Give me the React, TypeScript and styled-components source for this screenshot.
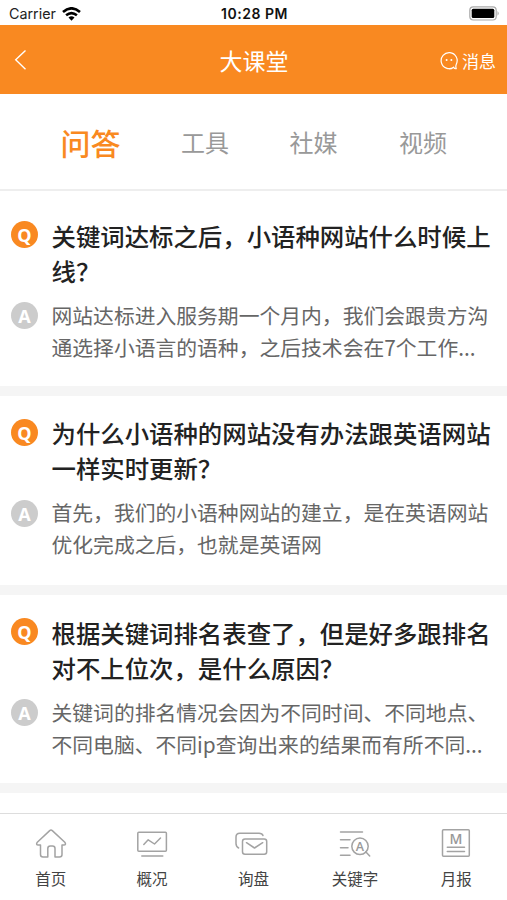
import React from "react";
import styled, { createGlobalStyle } from "styled-components";

const GlobalStyle = createGlobalStyle`
  * { box-sizing: border-box; }
  body {
    margin: 0;
    background: #fff;
    font-family: "Noto Sans CJK SC", sans-serif;
  }
`;

const Screen = styled.div`
  width: 507px;
  height: 900px;
  display: flex;
  flex-direction: column;
  overflow: hidden;
  background: #fff;
`;

const StatusBar = styled.div`
  flex: none;
  height: 25px;
  padding: 3px 7px 0 9px;
  display: grid;
  grid-template-columns: 1fr auto 1fr;
  align-items: center;
  font-family: Inter, sans-serif;
  font-size: 14.3px;
  line-height: 20px;
  color: #222;
`;

const Carrier = styled.div`
  display: flex;
  align-items: center;
  gap: 6px;
`;

const Clock = styled.div`
  font-size: 14px;
  letter-spacing: 0.5px;
  font-weight: 600;
  color: #111;
`;

const BatteryIcon = styled.svg`
  justify-self: end;
  margin-bottom: 2px;
`;

const Header = styled.header`
  flex: none;
  height: 69px;
  padding: 0 11px 0 12px;
  display: grid;
  grid-template-columns: 1fr auto 1fr;
  align-items: center;
  background: #f98921;
  color: #fff;
`;

const Title = styled.h1`
  margin: 0;
  font-size: 23px;
  font-weight: 400;
  line-height: 30px;
`;

const Message = styled.div`
  justify-self: end;
  display: flex;
  align-items: center;
  gap: 4px;
  font-size: 17px;
  line-height: 24px;
  padding-top: 3px;
`;

const Tabs = styled.nav`
  flex: none;
  height: 97px;
  padding: 0 22px 0 37px;
  display: grid;
  grid-template-columns: 107px 122px 95px 1fr;
  align-items: center;
  justify-items: center;
  border-bottom: 2px solid #eee;
`;

const Tab = styled.div<{ $active?: boolean }>`
  font-size: ${(p) => (p.$active ? 30 : 24)}px;
  font-weight: ${(p) => (p.$active ? 500 : 400)};
  line-height: 36px;
  color: ${(p) => (p.$active ? "#f98921" : "#999")};
`;

const List = styled.main`
  flex: 1;
  min-height: 0;
  overflow: hidden;
`;

const Card = styled.article<{ $height: number; $top: number }>`
  height: ${(p) => p.$height}px;
  padding: ${(p) => p.$top}px 10px 0 11px;
  border-bottom: 10px solid #f5f5f5;
`;

const Row = styled.div<{ $gap?: number }>`
  display: grid;
  grid-template-columns: 27px 1fr;
  column-gap: 13.5px;
  margin-top: ${(p) => p.$gap ?? 0}px;
`;

const Badge = styled.div<{ $tone: string }>`
  width: 27px;
  height: 27px;
  margin-top: 3.4px;
  padding-top: 2px;
  border-radius: 50%;
  display: flex;
  align-items: center;
  justify-content: center;
  background: ${(p) => p.$tone};
  color: #fff;
  font-family: "Open Sans", sans-serif;
  font-size: 18px;
  font-weight: 700;
  line-height: 25px;
`;

const Question = styled.h2`
  margin: 0;
  font-size: 24.4px;
  font-weight: 500;
  line-height: 35px;
  color: #222;
  white-space: pre;
`;

const Answer = styled.p`
  margin: 0;
  font-size: 20.8px;
  line-height: 32px;
  color: #666;
  white-space: pre;
`;

const BottomBar = styled.nav`
  flex: none;
  height: 87px;
  padding-top: 12px;
  display: grid;
  grid-template-columns: repeat(5, 1fr);
  border-top: 1px solid #ddd;
  background: #fff;
`;

const NavItem = styled.div`
  display: flex;
  flex-direction: column;
  align-items: center;
  gap: 5px;
  font-size: 15.5px;
  line-height: 23px;
  color: #444;
`;

const NavIcon = styled.svg`
  width: 36px;
  height: 36px;
  fill: none;
  stroke: #a3a3a3;
  stroke-width: 1.5;
  stroke-linecap: round;
  stroke-linejoin: round;
`;

const IconLetter = styled.text`
  fill: #999;
  stroke: none;
  text-anchor: middle;
  font-family: "Open Sans", sans-serif;
  font-weight: 600;
`;

const cards = [
  {
    height: 205, top: 27, gap: 10.5,
    q: "关键词达标之后，小语种网站什么时候上\n线？",
    a: "网站达标进入服务期一个月内，我们会跟贵方沟\n通选择小语言的语种，之后技术会在7个工作...",
  },
  {
    height: 199, top: 19.4, gap: 11,
    q: "为什么小语种的网站没有办法跟英语网站\n一样实时更新？",
    a: "首先，我们的小语种网站的建立，是在英语网站\n优化完成之后，也就是英语网",
  },
  {
    height: 198, top: 20, gap: 11,
    q: "根据关键词排名表查了，但是好多跟排名\n对不上位次，是什么原因？",
    a: "关键词的排名情况会因为不同时间、不同地点、\n不同电脑、不同ip查询出来的结果而有所不同...",
  },
];

const navItems = [
  {
    label: "首页",
    icon: (
      <path d="M16.7 4.6Q18 3.4 19.3 4.6L31.8 16.2Q33.6 18.8 30.8 18.9H29V28.5Q29 31 26.5 31H22V22.5Q22 20 19.5 20H17.3Q14.8 20 14.8 22.5V31H10Q7.5 31 7.5 28.5V18.9H5.3Q2.5 18.8 4.3 16.2Z" />
    ),
  },
  {
    label: "概况",
    icon: (
      <>
        <rect x="3.8" y="6.2" width="28.6" height="19" rx="1" />
        <path d="M9.8 18.5L14.2 13.8L20.5 18L26.5 12M7.8 30.1H28.8" />
      </>
    ),
  },
  {
    label: "询盘",
    icon: (
      <>
        <path d="M3.6 22Q1 20.5 1 17.5V11Q1 7.2 4.8 7.2H24Q27.2 7.2 28 9.5" />
        <rect x="7.5" y="13" width="24.2" height="15.2" rx="2.5" />
        <path d="M11.5 16.7L19.5 22L27.7 16.7" />
      </>
    ),
  },
  {
    label: "关键字",
    icon: (
      <>
        <path d="M3.5 6H25.5M3.5 13.8H13M3.5 21.7H11M3.5 29.3H13M28.7 25.7L32.7 30" />
        <circle cx="23" cy="20.3" r="8.2" />
        <IconLetter x="23" y="24.8" fontSize="12.5">A</IconLetter>
      </>
    ),
  },
  {
    label: "月报",
    icon: (
      <>
        <rect x="4.5" y="3.7" width="26.8" height="26.6" rx="1" />
        <path d="M9.3 21.3H26.5M9.3 25.4H26.5" />
        <IconLetter x="18" y="17.8" fontSize="14">M</IconLetter>
      </>
    ),
  },
];

export default function App() {
  return (
    <Screen>
      <GlobalStyle />
      <StatusBar>
        <Carrier>
          Carrier
          <svg width="19" height="14" viewBox="0 0 19 14" fill="none" stroke="#000" strokeWidth="2.6">
            <path d="M1 5Q9.5 -2.4 18 5M4.1 8.3Q9.5 3.9 14.9 8.3" />
            <path d="M6.5 10.5Q9.5 8.2 12.5 10.5L9.5 13.7Z" fill="#000" stroke="none" />
          </svg>
        </Carrier>
        <Clock>10:28 PM</Clock>
        <BatteryIcon width="31" height="15" viewBox="0 0 31 15">
          <rect x="0.8" y="0.8" width="26.4" height="13.2" rx="3.5" fill="#fff" stroke="#aaa" strokeWidth="1.2" />
          <rect x="2.7" y="2.7" width="22.6" height="9.4" rx="1.5" fill="#000" />
          <path d="M28.5 5Q31 7.4 28.5 9.8Z" fill="#aaa" />
        </BatteryIcon>
      </StatusBar>
      <Header>
        <svg width="16" height="22" viewBox="0 0 16 22" fill="none" stroke="#fff" strokeWidth="1.4">
          <path d="M13.5 1.5L3.7 10.7L13.5 20.2" />
        </svg>
        <Title>大课堂</Title>
        <Message>
          <svg width="18" height="18" viewBox="0 0 18 18" fill="none" stroke="#fff" strokeWidth="1.2">
            <path d="M13.7 15.2A8 8 0 1 1 16.3 12.2Q15.4 14 16.2 16.6Q14.8 17.2 13.7 15.2Q11.5 17 9 17" />
            <circle cx="6.6" cy="8" r="1" fill="#fff" stroke="none" />
            <circle cx="11.4" cy="8" r="1" fill="#fff" stroke="none" />
          </svg>
          消息
        </Message>
      </Header>
      <Tabs>
        <Tab $active>问答</Tab>
        <Tab>工具</Tab>
        <Tab>社媒</Tab>
        <Tab>视频</Tab>
      </Tabs>
      <List>
        {cards.map((c) => (
          <Card key={c.q} $height={c.height} $top={c.top}>
            <Row>
              <Badge $tone="#f98921">Q</Badge>
              <Question>{c.q}</Question>
            </Row>
            <Row $gap={c.gap}>
              <Badge $tone="#ccc">A</Badge>
              <Answer>{c.a}</Answer>
            </Row>
          </Card>
        ))}
      </List>
      <BottomBar>
        {navItems.map((n) => (
          <NavItem key={n.label}>
            <NavIcon viewBox="0 0 36 36">{n.icon}</NavIcon>
            {n.label}
          </NavItem>
        ))}
      </BottomBar>
    </Screen>
  );
}
